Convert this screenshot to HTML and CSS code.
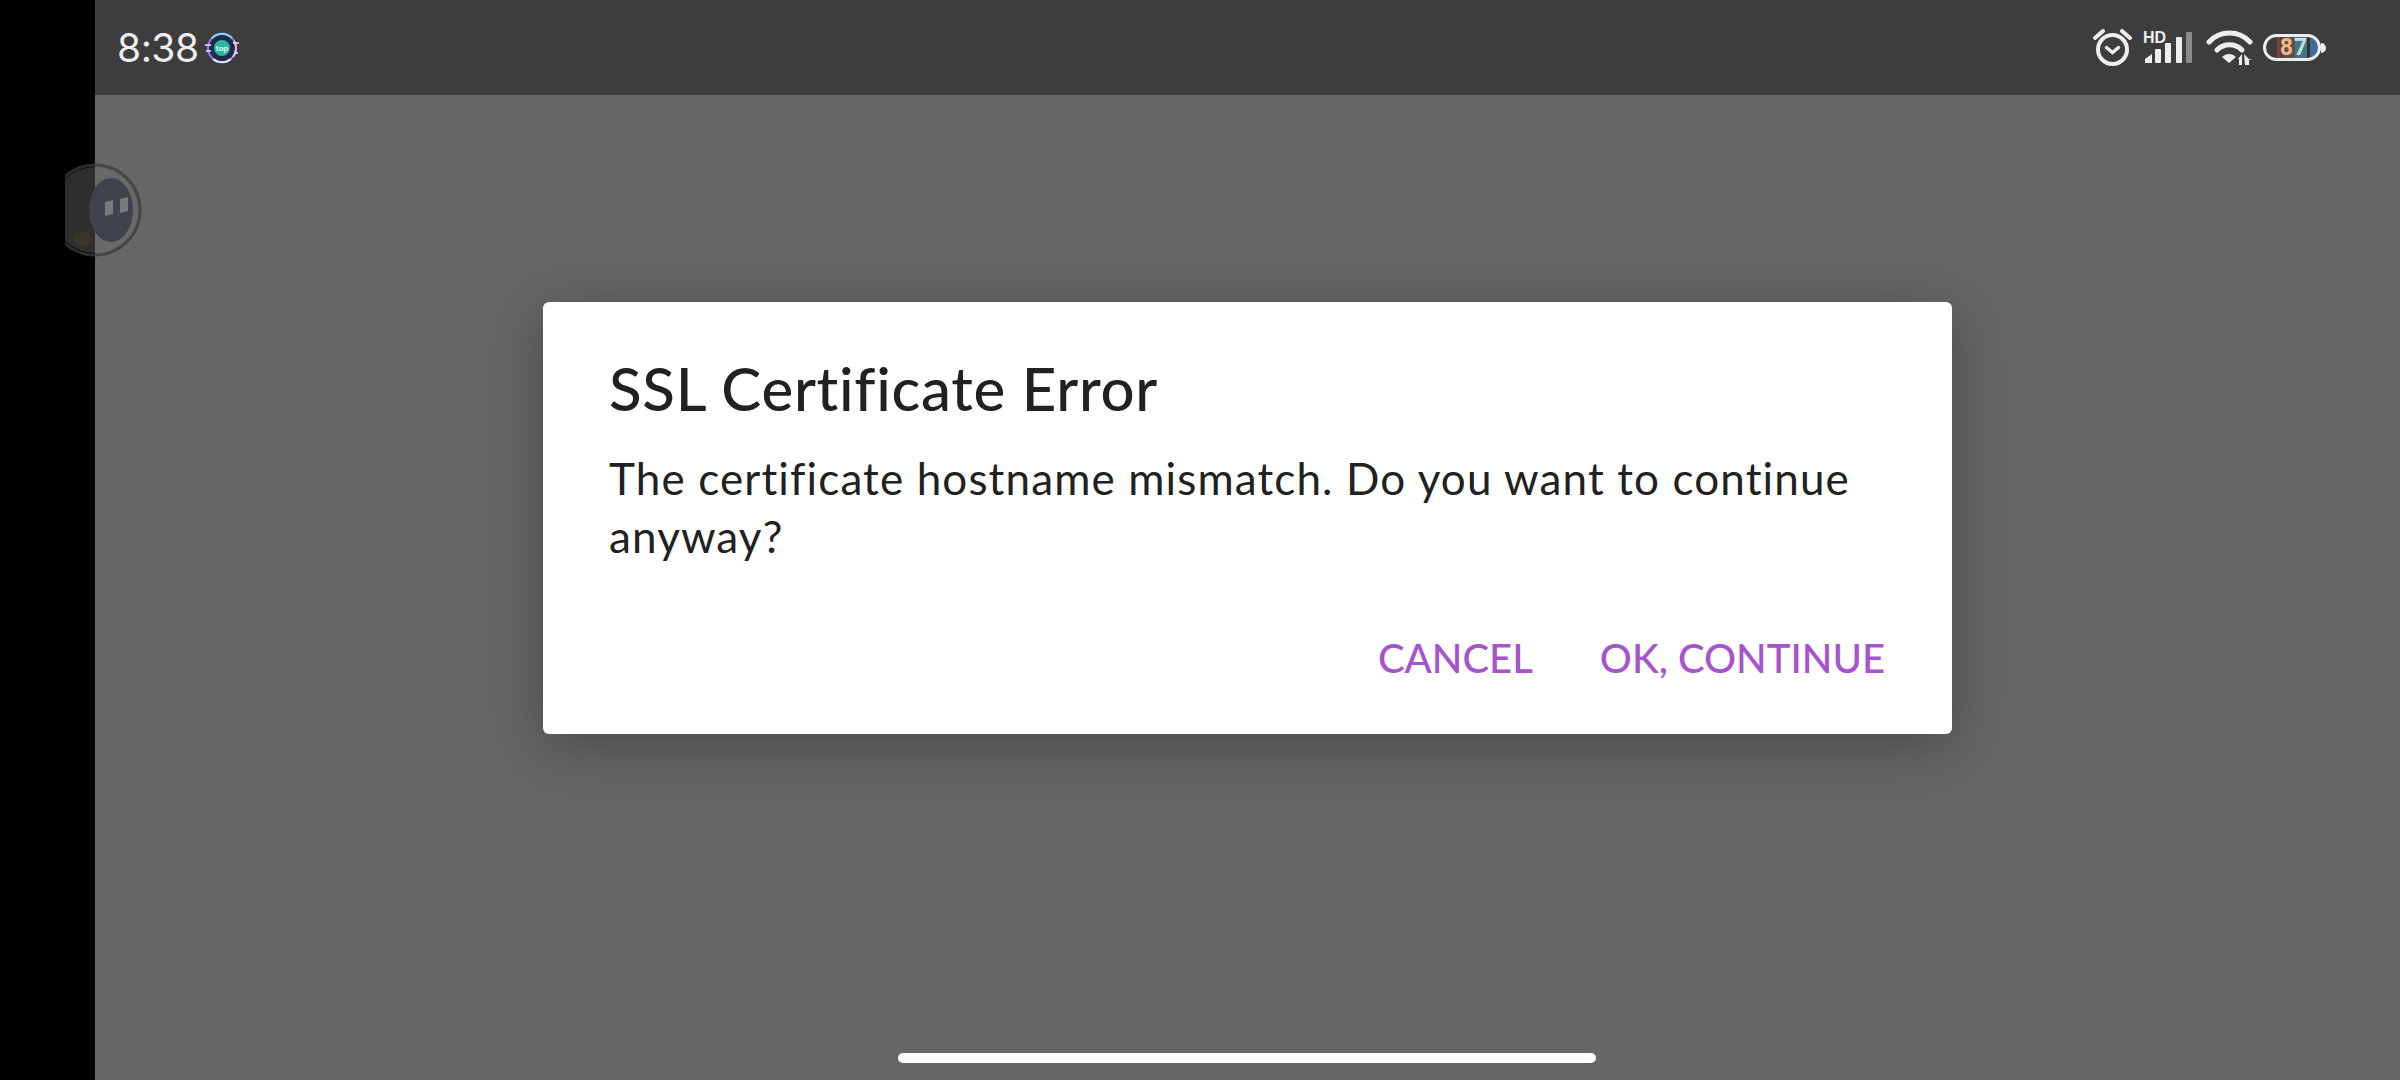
FILE: index.html
```html
<!DOCTYPE html>
<html lang="en">
<head>
    <meta charset="UTF-8">
    <meta name="viewport" content="width=device-width, initial-scale=1.0">
    <title>SSL Certificate Error</title>
    <link rel="stylesheet" href="styles.css">
</head>
<body>
    <div class="cutout"></div>
    <div class="screen">
        <header class="status-bar">
            <div class="status-left">
                <span class="clock">8:38</span>
                <svg class="notif-icon" width="34" height="32" viewBox="0 0 34 32">
                    <circle cx="17" cy="16" r="14" fill="#232a45" stroke="#8f7cf0" stroke-width="2"/>
                    <path d="M7 6 A14 14 0 0 1 27 6" fill="none" stroke="#7fd4f5" stroke-width="2"/>
                    <path d="M29 9 A14 14 0 0 1 28 25" fill="none" stroke="#f0b8f0" stroke-width="2"/>
                    <path d="M8 27 A14 14 0 0 0 26 27" fill="none" stroke="#e8e8ff" stroke-width="2"/>
                    <path d="M0 13h6M1 19h5M28 11h6M29 21h4" stroke="#dfe6ff" stroke-width="1.500"/>
                    <circle cx="17" cy="16" r="8" fill="#23b7a4"/>
                    <text class="notif-text" x="17" y="18.500" text-anchor="middle">top</text>
                </svg>
            </div>
            <div class="status-right">
                <svg width="39" height="37" viewBox="0 0 39 37">
                    <path d="M2 9 L10 2M37 9 L29 2" stroke="#eee" stroke-width="4" stroke-linecap="round" fill="none"/>
                    <circle cx="19.500" cy="20.500" r="14.500" fill="none" stroke="#eee" stroke-width="4"/>
                    <path d="M13.500 18.500 L19.500 23.500 L25.500 18.500" fill="none" stroke="#eee" stroke-width="3.500" stroke-linecap="round"/>
                </svg>
                <div class="signal">
                    <span class="hd">HD</span>
                    <svg width="50" height="31" viewBox="0 0 50 31">
                        <path d="M2 31v-4l7-5v9z" fill="#eee"/>
                        <rect x="12" y="17" width="6" height="14" rx="1" fill="#eee"/>
                        <rect x="22" y="11" width="6" height="20" rx="1" fill="#eee"/>
                        <rect x="33" y="5" width="6" height="26" rx="1" fill="#eee"/>
                        <rect x="43" y="0" width="6" height="31" rx="1" fill="#8a8a8a"/>
                    </svg>
                </div>
                <svg class="wifi" width="47" height="35" viewBox="0 0 47 35">
                    <path d="M3 12 C14 0 33 0 44 12" fill="none" stroke="#eee" stroke-width="5" stroke-linecap="round"/>
                    <path d="M11 20 C18 13 29 13 36 20" fill="none" stroke="#eee" stroke-width="5" stroke-linecap="round"/>
                    <path d="M16 27 C20 23 26 23 30 27 L23 33z" fill="#eee"/>
                    <path d="M32 29l4-5v11h-3v-6zM38 24l5 5 3 1h-3v5h-4z" fill="#eee"/>
                </svg>
                <div class="battery">
                    <div class="battery-body">
                        <span class="battery-num num-8">8</span><span class="battery-num num-7">7</span>
                    </div>
                    <span class="battery-cap"></span>
                </div>
            </div>
        </header>

        <main class="stage">
            <section class="dialog">
                <h1 class="dialog-title">SSL Certificate Error</h1>
                <p class="dialog-body">The certificate hostname mismatch. Do you want to continue anyway?</p>
                <div class="dialog-actions">
                    <button class="action">CANCEL</button>
                    <button class="action">OK, CONTINUE</button>
                </div>
            </section>
            <div class="home-bar"></div>
        </main>
    </div>

    <!-- floating assistant button, half over the cutout -->
    <svg class="float-ball" width="80" height="100" viewBox="0 0 80 100">
        <circle cx="30" cy="50" r="43" fill="rgba(110,110,110,0.42)"/>
        <ellipse cx="18" cy="79" rx="9" ry="8" fill="rgba(110,100,20,0.14)"/>
        <circle cx="30" cy="50" r="45" fill="none" stroke="rgba(60,60,60,0.75)" stroke-width="3"/>
        <ellipse cx="46" cy="50" rx="22" ry="32" fill="#40434e"/>
        <path d="M40 42l8-2v14l-8 2zM55 39l8-2v14l-8 2z" fill="#7a7a7a"/>
    </svg>
</body>
</html>
```

FILE: styles.css
```css
* { box-sizing: border-box; }
html, body { margin: 0; height: 100%; }
body { display: flex; width: 2400px; height: 1080px; overflow: hidden; background: #000; font-family: Lato, sans-serif; font-variant-ligatures: none; }

.cutout { width: 95px; background: #000; flex-shrink: 0; }
.screen { flex: 1; display: flex; flex-direction: column; background: #666; }

.status-bar { height: 95px; background: #3d3d3d; display: flex; justify-content: space-between; align-items: center; padding: 0 74px 0 22px; color: #eee; flex-shrink: 0; }
.status-left { display: flex; align-items: center; gap: 6px; }
.clock { font-family: Inter, sans-serif; font-size: 39px; line-height: 1; letter-spacing: -0.5px; }
.notif-text { font-family: "Liberation Sans", sans-serif; font-size: 8px; font-weight: bold; fill: #eafff8; }

.status-right { display: flex; align-items: center; gap: 10px; }
.signal { position: relative; margin-left: 1px; width: 50px; height: 31px; }
.signal svg { display: block; }
.hd { position: absolute; left: 0; top: -2px; font-family: "Liberation Sans", sans-serif; font-weight: bold; font-size: 16px; line-height: 1; }
.wifi { margin-left: 3px; }

.battery { display: flex; align-items: center; }
.battery-body { width: 58px; height: 27px; border: 3px solid #eee; border-radius: 14px; padding-left: 3px; display: flex; justify-content: center; align-items: center; background: linear-gradient(90deg, #3d3d3d 0 11px, #7c4040 11px 14px, #444 14px 17px, #5a5048 17px 29px, #4f7080 29px 41px, #333 41px 44px, #3f6a9a 44px); }
.battery-num { font-family: Roboto, sans-serif; font-weight: bold; font-size: 23px; line-height: 1; }
.num-8 { color: #f2b585; }
.num-7 { color: #b5e6ee; margin-left: 1px; }
.battery-cap { width: 5px; height: 10px; background: #eee; border-radius: 0 5px 5px 0; }

.stage { flex: 1; display: flex; flex-direction: column; align-items: center; padding: 207px 0 17px; }

.dialog { width: 1409px; height: 432px; background: #fff; border-radius: 6px; padding: 50px 67px 0 66px; box-shadow: 0 12px 60px rgba(0,0,0,0.28); display: flex; flex-direction: column; }
.dialog-title { margin: 0; font-size: 60px; line-height: 72px; font-weight: 500; color: #212121; letter-spacing: 0.7px; }
.dialog-body { margin: 25px 0 0; font-size: 44px; line-height: 58px; color: #212121; letter-spacing: 1.13px; }
.dialog-actions { display: flex; justify-content: flex-end; gap: 67px; margin-top: 65px; }
.action { border: 0; padding: 0; background: none; font: inherit; font-size: 40px; line-height: 56px; font-weight: 500; color: #a653cd; }

.home-bar { width: 698px; height: 10px; margin-right: 1px; background: #fff; border-radius: 5px; margin-top: auto; }

.float-ball { position: absolute; left: 65px; top: 160px; }
```
